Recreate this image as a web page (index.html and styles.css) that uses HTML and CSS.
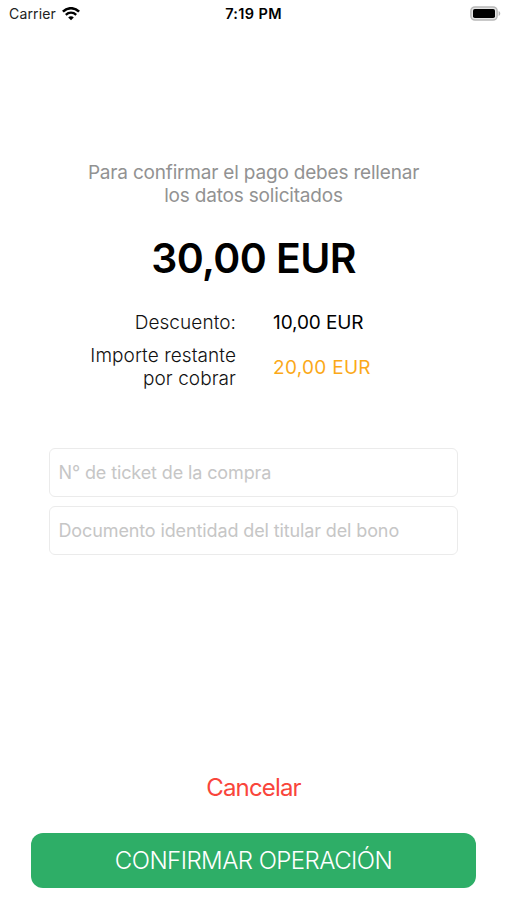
FILE: index.html
```
<!DOCTYPE html>
<html lang="es">
<head>
    <meta charset="UTF-8">
    <meta name="viewport" content="width=device-width, initial-scale=1.0">
    <title>Confirmar operación</title>
    <link rel="stylesheet" href="styles.css">
</head>
<body>
    <div class="screen">
        <header class="status-bar">
            <div class="carrier">
                <span>Carrier</span>
                <svg class="wifi" width="18" height="14" viewBox="0 0 18 14">
                    <path d="M.9 4.6C5.5 .1 12.5 .1 17.1 4.6" fill="none" stroke="#000" stroke-width="2.6"/>
                    <path d="M3.8 7.8C6.8 5 11.2 5 14.2 7.8" fill="none" stroke="#000" stroke-width="2.3"/>
                    <path d="M9 13.2L6.2 10.4C7.8 9 10.2 9 11.8 10.4Z"/>
                </svg>
            </div>
            <div class="time">7:19 PM</div>
            <svg class="battery" width="31" height="15" viewBox="0 0 31 15">
                <rect x=".9" y=".9" width="26.2" height="13.2" rx="4" fill="#e4e4e4" stroke="#b8b8b8" stroke-width="1.5"/>
                <rect x="3" y="3" width="22" height="9" rx="1.8"/>
                <path d="M28.6 5v5c2.2-.8 2.2-4.2 0-5z" fill="#b4b4b4"/>
            </svg>
        </header>

        <main class="content">
            <p class="message">Para confirmar el pago debes rellenar<br>los datos solicitados</p>
            <h1 class="total">30,00 EUR</h1>

            <div class="amounts">
                <span class="label">Descuento:</span>
                <span class="value discount">10,00 EUR</span>
                <span class="label">Importe restante<br>por cobrar</span>
                <span class="value remaining">20,00 EUR</span>
            </div>

            <form class="fields">
                <input type="text" class="ticket" placeholder="N° de ticket de la compra">
                <input type="text" class="document" placeholder="Documento identidad del titular del bono">
            </form>
        </main>

        <footer class="actions">
            <button type="button" class="cancel">Cancelar</button>
            <button type="button" class="confirm">CONFIRMAR OPERACIÓN</button>
        </footer>
    </div>
</body>
</html>
```
FILE: styles.css
```
* {
    box-sizing: border-box;
}
body {
    margin: 0;
    background-color: #fff;
    font-family: Inter, "Liberation Sans", sans-serif;
    color: #000;
}
.screen {
    display: flex;
    flex-direction: column;
    height: 900px;
    overflow: hidden;
}
.status-bar {
    display: grid;
    grid-template-columns: 1fr auto 1fr;
    align-items: center;
    height: 27px;
    padding: 0 6px 0 9px;
    font-size: 14px;
}
.carrier {
    display: flex;
    align-items: center;
    gap: 6px;
    color: #222;
    letter-spacing: 0.15px;
}
.time {
    font-weight: 600;
    font-size: 14.5px;
    letter-spacing: 0.35px;
    margin-right: 3px;
}
.battery {
    justify-self: end;
}
.content {
    flex: 1;
    padding: 134px 49px 0;
}
.message {
    margin: 0;
    text-align: center;
    font-size: 19px;
    line-height: 23px;
    letter-spacing: -0.19px;
    color: #929292;
}
.total {
    margin: 25px 0 0;
    text-align: center;
    font-size: 41px;
    font-weight: 600;
    line-height: 52px;
    letter-spacing: -0.6px;
}
.amounts {
    display: grid;
    grid-template-columns: 187px 1fr;
    column-gap: 37px;
    row-gap: 10px;
    align-items: center;
    margin-top: 27px;
    font-size: 19px;
    line-height: 23px;
}
.label {
    text-align: right;
    font-weight: 300;
    letter-spacing: 0.07px;
    color: #111;
}
.discount {
    letter-spacing: -0.1px;
}
.remaining {
    letter-spacing: 0.3px;
    color: #fba919;
}
.fields {
    display: flex;
    flex-direction: column;
    gap: 9px;
    margin-top: 58px;
}
.fields input {
    width: 409px;
    height: 49px;
    padding: 0 8px 0 8.5px;
    border: 1px solid #ebebeb;
    border-radius: 6px;
    background-color: #fff;
    font-family: inherit;
    font-size: 18px;
    letter-spacing: -0.12px;
}
.fields input::placeholder {
    color: #c6c6c6;
}
.actions {
    display: flex;
    flex-direction: column;
    padding: 0 31px 12px;
    gap: 27px;
}
.actions button {
    border: none;
    font-family: inherit;
    font-size: 24px;
}
.cancel {
    align-self: center;
    height: 38px;
    padding: 0;
    background: none;
    letter-spacing: -0.85px;
    color: #f9453b;
}
.confirm {
    height: 55px;
    border-radius: 12px;
    background-color: #2eae67;
    color: #fff;
    font-weight: 300;
    letter-spacing: -0.55px;
}
```
